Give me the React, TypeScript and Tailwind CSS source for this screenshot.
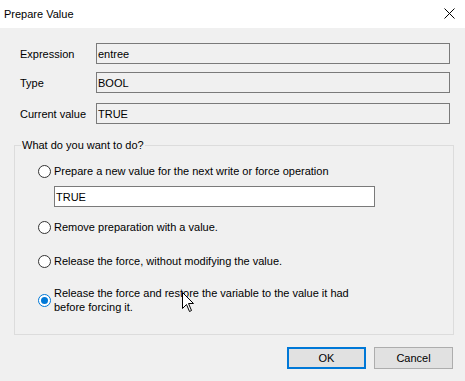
import React from "react";

const font = { fontFamily: '"Liberation Sans", Arial, sans-serif' };

const Field = ({ label, value, className }: { label: string; value: string; className: string }) => (
  <div className={"flex items-center " + className}>
    <span className="w-[76px] whitespace-nowrap text-[11px] leading-[14px] text-black">{label}</span>
    <div className="flex h-[21px] flex-1 items-center border border-[#7a7a7a] bg-[#f0f0f0] pl-[1px] text-[11px] leading-[14px] text-black">
      {value}
    </div>
  </div>
);

const Radio = ({ checked }: { checked?: boolean }) =>
  checked ? (
    <span className="flex h-[13px] w-[13px] shrink-0 items-center justify-center rounded-full border border-[#0078d7] bg-white">
      <span className="h-[7px] w-[7px] rounded-full bg-[#0078d7]" />
    </span>
  ) : (
    <span className="h-[13px] w-[13px] shrink-0 rounded-full border border-[#333333] bg-white" />
  );

const App = () => {
  return (
    <div className="relative h-[381px] w-[465px] overflow-hidden bg-[#f0f0f0] text-black" style={font}>
      {/* title bar */}
      <div className="flex h-[28px] items-center justify-between bg-white pl-[4px] pr-[10px]">
        <span className="text-[11px] leading-[14px]">Prepare Value</span>
        <svg width="11" height="11" viewBox="0 0 11 11" className="mb-[2px]">
          <path d="M0.5 0.5 L10.5 10.5 M10.5 0.5 L0.5 10.5" stroke="#000" strokeWidth="1" />
        </svg>
      </div>

      <div className="pl-[20px] pr-[15px]">
        <Field label="Expression" value="entree" className="mt-[15px]" />
        <Field label="Type" value="BOOL" className="mt-[8px]" />
        <Field label="Current value" value="TRUE" className="mt-[10px]" />
      </div>

      <fieldset className="ml-[14px] mr-[11px] mt-[14px] h-[197px] border border-[#dcdcdc]">
        <legend className="ml-[6px] px-[1px] text-[11px] leading-[14px]">What do you want to do?</legend>
        <div className="pl-[23px] text-[11px] leading-[14px]">
          <div className="mt-[12px] flex items-center gap-[3px]">
            <Radio />
            <span>Prepare a new value for the next write or force operation</span>
          </div>
          <div className="ml-[16px] mt-[8px] flex h-[21px] w-[321px] items-center border border-[#7a7a7a] bg-white pl-[1px]">
            TRUE
          </div>
          <div className="mt-[13px] flex items-center gap-[3px]">
            <Radio />
            <span>Remove preparation with a value.</span>
          </div>
          <div className="mt-[20px] flex items-center gap-[3px]">
            <Radio />
            <span>Release the force, without modifying the value.</span>
          </div>
          <div className="mt-[18px] flex items-center gap-[3px]">
            <Radio checked />
            <span className="w-[310px]">Release the force and restore the variable to the value it had before forcing it.</span>
          </div>
        </div>
      </fieldset>

      <div className="mt-[12px] flex justify-end gap-[8px] pr-[12px]">
        <button className="h-[22px] w-[79px] border-2 border-[#0078d7] bg-[#e1e1e1] text-[11px] leading-[14px]">OK</button>
        <button className="h-[22px] w-[79px] border border-[#adadad] bg-[#e1e1e1] text-[11px] leading-[14px]">Cancel</button>
      </div>

      {/* mouse pointer */}
      <svg className="absolute left-[182px] top-[292px]" width="13" height="21" viewBox="0 0 13 21">
        <path d="M0.5 0.5 L0.5 16.5 L4.5 12.5 L7.5 19.5 L9.5 18.5 L6.5 11.5 L11.5 11.5 Z" fill="#fff" stroke="#000" strokeWidth="1" />
      </svg>
    </div>
  );
};

export default App;
